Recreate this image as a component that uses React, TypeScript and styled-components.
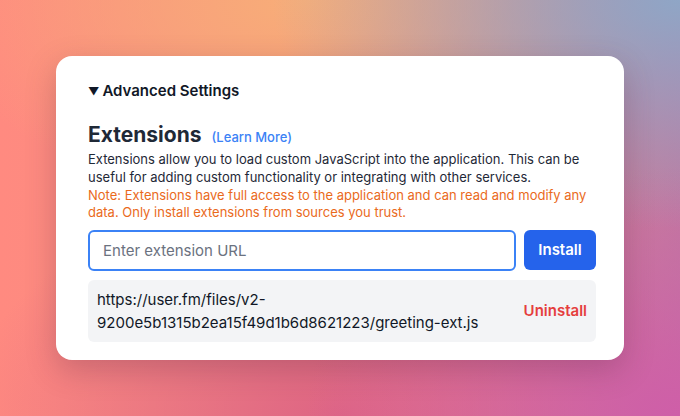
import React from 'react'
import styled, { createGlobalStyle } from 'styled-components'

const GlobalStyle = createGlobalStyle`
  html, body {
    margin: 0;
    padding: 0;
    height: 100%;
  }
  body {
    font-family: Inter, "Noto Sans", sans-serif;
    background:
      radial-gradient(ellipse 60% 55% at 100% 0%, #8fa6c6 0%, rgba(143, 166, 198, 0) 100%),
      radial-gradient(ellipse 55% 60% at 100% 100%, #cf5ea8 0%, rgba(207, 94, 168, 0) 100%),
      radial-gradient(ellipse 55% 50% at 45% 0%, #f8ae78 0%, rgba(248, 174, 120, 0) 100%),
      radial-gradient(ellipse 55% 55% at 50% 100%, #de6484 0%, rgba(222, 100, 132, 0) 100%),
      linear-gradient(90deg, #ff8a80 0%, #f58f80 45%, #c07aa0 100%);
  }
  #root {
    height: 100%;
  }
`

const Page = styled.div`
  height: 416px;
  display: flex;
  align-items: center;
  justify-content: center;
`

const Card = styled.div`
  width: 568px;
  box-sizing: border-box;
  padding: 24px 28px 18px 32px;
  background: #ffffff;
  border-radius: 16px;
  box-shadow: 0 10px 30px rgba(80, 30, 60, 0.25);
  color: #1f2937;
`

const Summary = styled.div`
  display: flex;
  align-items: center;
  gap: 3px;
  font-size: 15px;
  font-weight: 600;
  line-height: 22px;
  color: #111827;
`

const Caret = styled.span`
  font-size: 11px;
  line-height: 22px;
`

const Header = styled.div`
  display: flex;
  align-items: baseline;
  gap: 10px;
  margin: 19px 0 2px;
`

const Title = styled.h2`
  margin: 0;
  font-size: 21px;
  font-weight: 700;
  line-height: 28px;
  color: #1f2937;
`

const LearnMore = styled.a`
  font-size: 13px;
  font-weight: 500;
  color: #3b82f6;
  text-decoration: none;
`

const Text = styled.p<{ $tone?: 'note' }>`
  margin: 0;
  font-size: 13px;
  line-height: 17.7px;
  color: ${({ $tone }) => ($tone === 'note' ? '#ea6a1c' : '#1f2937')};
`

const InstallRow = styled.div`
  display: flex;
  gap: 8px;
  margin-top: 8px;
`

const UrlInput = styled.input`
  flex: 1;
  height: 41px;
  box-sizing: border-box;
  padding: 0 13px;
  border: 2px solid #3b82f6;
  border-radius: 6px;
  font-family: inherit;
  font-size: 15px;
  color: #1f2937;
  outline: none;
  &::placeholder {
    color: #6b7280;
  }
`

const Button = styled.button`
  width: 72px;
  height: 40px;
  border: none;
  border-radius: 6px;
  background: #2563eb;
  color: #ffffff;
  font-family: inherit;
  font-size: 15px;
  font-weight: 600;
`

const ExtensionItem = styled.div`
  display: flex;
  align-items: center;
  justify-content: space-between;
  margin-top: 9px;
  padding: 8px 9px;
  background: #f3f4f6;
  border-radius: 6px;
`

const ExtensionUrl = styled.span`
  font-size: 15px;
  line-height: 23px;
  color: #111827;
  word-break: break-all;
  max-width: 400px;
`

const Uninstall = styled.button`
  border: none;
  background: none;
  padding: 0;
  color: #e53e3e;
  font-family: inherit;
  font-size: 15px;
  font-weight: 600;
`

const App: React.FC = () => {
  return (
    <Page>
      <GlobalStyle />
      <Card>
        <Summary>
          <Caret>▼</Caret>
          Advanced Settings
        </Summary>
        <Header>
          <Title>Extensions</Title>
          <LearnMore href="#">(Learn More)</LearnMore>
        </Header>
        <Text>
          Extensions allow you to load custom JavaScript into the application. This can be
          useful for adding custom functionality or integrating with other services.
        </Text>
        <Text $tone="note">
          Note: Extensions have full access to the application and can read and modify any
          data. Only install extensions from sources you trust.
        </Text>
        <InstallRow>
          <UrlInput placeholder="Enter extension URL" />
          <Button>Install</Button>
        </InstallRow>
        <ExtensionItem>
          <ExtensionUrl>
            https://user.fm/files/v2-
            <br />
            9200e5b1315b2ea15f49d1b6d8621223/greeting-ext.js
          </ExtensionUrl>
          <Uninstall>Uninstall</Uninstall>
        </ExtensionItem>
      </Card>
    </Page>
  )
}

export default App
